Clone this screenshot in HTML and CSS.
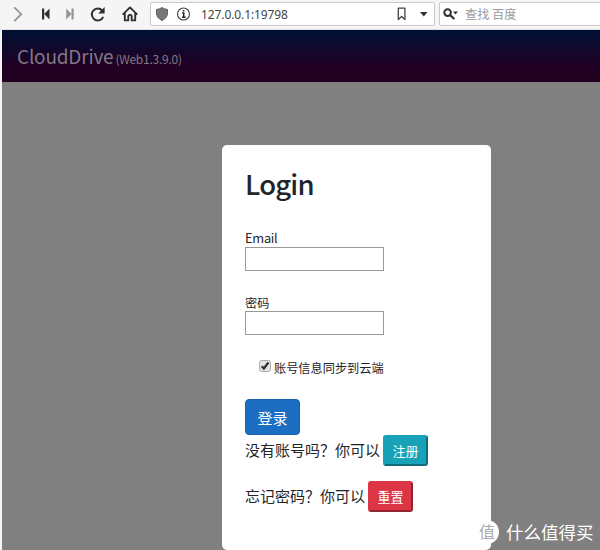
FILE: index.html
```html
<!DOCTYPE html>
<html lang="zh-CN">
<head>
<meta charset="utf-8">
<title>CloudDrive</title>
<link rel="stylesheet" href="styles.css">
</head>
<body>
<div class="toolbar">
  <svg class="nav-icons" width="150" height="29" viewBox="0 0 150 29" fill="none">
    <path d="M14.300 7.300l7 6.900-7 6.900" stroke="#929292" stroke-width="1.700"/>
    <path d="M42 8.500h2.200v11H42zM49.500 8.500v11L44.200 14z" fill="#303030"/>
    <path d="M71.500 8.500h2.200v11h-2.200zM66.200 8.500v11L71.500 14z" fill="#969696"/>
    <path d="M102.200 10.600A5.900 5.900 0 1 0 103.200 16.800" stroke="#303030" stroke-width="2"/>
    <path d="M104.600 7v6.500h-6.500z" fill="#303030"/>
    <path d="M122.700 14.600L130 7.400l7.300 7.200M124.800 13.200v7.200h3.500v-4q0-1.500 1.700-1.500t1.700 1.500v4h3.500v-7.200" stroke="#303030" stroke-width="1.900" stroke-linejoin="round"/>
  </svg>
  <div class="address">
    <svg width="42" height="22" viewBox="0 0 42 22" fill="none">
      <path d="M5.500 6.500Q9 6 11 4.600Q13 6 16.500 6.500V10q0 5-5.500 7.500Q5.500 15 5.500 10z" fill="#777" stroke="#606060"/>
      <circle cx="32.500" cy="11" r="6" stroke="#444" stroke-width="1.100"/>
      <path d="M31.200 9.900h1.500v4M31 14.200h3.600M31.700 7.700h1.700" stroke="#222" stroke-width="1.500"/>
    </svg>
    <span class="url">127.0.0.1:19798</span>
    <svg width="40" height="22" viewBox="0 0 40 22" fill="none">
      <path d="M3.300 5.200h6.600v11.300l-3.300-3-3.300 3z" stroke="#444" stroke-width="1.300" stroke-linejoin="round"/>
      <path d="M25 9h7.500l-3.700 4.500z" fill="#333"/>
    </svg>
  </div>
  <div class="search">
    <svg width="25" height="22" viewBox="0 0 25 22" fill="none">
      <circle cx="7.600" cy="9.600" r="3.300" stroke="#303030" stroke-width="2"/>
      <path d="M10 12l4.300 4" stroke="#303030" stroke-width="2.300"/>
      <path d="M13 8.500h5l-2.500 3z" fill="#303030"/>
    </svg>
    <span>查找 百度</span>
  </div>
</div>
<div class="page">
  <header class="header"><span class="brand">CloudDrive</span><span class="version">(Web1.3.9.0)</span></header>
  <main class="main">
    <form class="card">
      <h1 class="title">Login</h1>
      <label class="label email" for="email">Email</label>
      <input class="field" id="email" type="text">
      <label class="label" for="password">密码</label>
      <input class="field" id="password" type="password">
      <label class="sync">
        <svg width="12" height="12" viewBox="0 0 12 12" fill="none">
          <rect x=".5" y=".5" width="11" height="11" rx="2" fill="#e5e5e5" stroke="#aaa"/>
          <path d="M2.700 6.200l2.200 2.300 4.500-6" stroke="#303030" stroke-width="2.200"/>
        </svg>
        <span>账号信息同步到云端</span>
      </label>
      <button class="login" type="button">登录</button>
      <div class="row"><span class="prompt">没有账号吗？你可以</span><button class="small register" type="button">注册</button></div>
      <div class="row"><span class="prompt">忘记密码？你可以</span><button class="small reset" type="button">重置</button></div>
    </form>
  </main>
</div>
<div class="watermark"><span class="mark">值</span><span class="watermark-text">什么值得买</span></div>
</body>
</html>
```
FILE: styles.css
```css
* { box-sizing: border-box; }
body {
  margin: 0;
  height: 550px;
  overflow: hidden;
  position: relative;
  background: #f5f5f5;
  color: #212529;
  font-family: "Noto Sans CJK SC", sans-serif;
}
svg { display: block; flex: none; }
.toolbar {
  display: flex;
  height: 30px;
  border-bottom: 1px solid #dce0e5;
}
.address, .search {
  display: flex;
  flex: none;
  align-items: center;
  height: 24px;
  margin-top: 2px;
  border: 1px solid #c9c9c9;
  border-radius: 2px;
  background: #fff;
}
.address { width: 285px; }
.address svg:last-child { margin-right: -1px; }
.search {
  width: 170px;
  margin-left: 4px;
  color: #999;
  font-size: 12.2px;
}
.url {
  flex: 1;
  padding-left: 8px;
  color: #444;
  font: 12px "Noto Sans", sans-serif;
  letter-spacing: -0.1px;
}
.page { margin-left: 2px; }
.header {
  display: flex;
  align-items: baseline;
  height: 52px;
  padding: 12px 0 0 15px;
  background: linear-gradient(#001033, #220023 75%, #220020);
  color: #827884;
  line-height: 28px;
}
.brand { font-size: 19px; letter-spacing: -0.2px; }
.version { margin-left: 2px; font-size: 12px; letter-spacing: -0.25px; }
.main {
  height: 468px;
  padding: 63px 0 0 220px;
  background: #808080;
}
.card {
  display: flex;
  flex-direction: column;
  align-items: flex-start;
  width: 268.5px;
  height: 405px;
  padding: 18px 23px 20px;
  border-radius: 5px;
  background: #fff;
}
.title {
  height: 67px;
  margin: 0;
  font-size: 27.5px;
  font-weight: 500;
  letter-spacing: -0.8px;
  line-height: 40px;
}
.label {
  height: 17px;
  font-size: 12.2px;
  line-height: 18px;
}
.email { font-size: 12.8px; letter-spacing: -0.25px; line-height: 16px; }
.field {
  width: 139px;
  height: 24px;
  margin: 0 0 23px;
  padding: 1px 4px;
  border: 1px solid #999;
  background: #fff;
}
.sync {
  display: flex;
  align-items: center;
  height: 20px;
  margin: 0 0 21px 14px;
  gap: 3px;
  font-size: 12.2px;
}
.sync svg { margin-top: -4px; }
.login {
  width: 55px;
  height: 36px;
  padding: 0;
  border: 1px solid #1861ac;
  border-radius: 4px;
  background: #1b6ec2;
  color: #fff;
  font: 15px "Noto Sans CJK SC", sans-serif;
}
.row {
  display: flex;
  align-items: center;
  height: 31px;
  margin-bottom: 15px;
  gap: 3px;
  font-size: 15px;
}
.prompt { margin-top: -2px; }
.small {
  width: 45px;
  height: 31px;
  padding: 0;
  border: 2px solid;
  border-radius: 3px;
  color: #fff;
  font: 13px "Noto Sans CJK SC", sans-serif;
}
.register { border-color: #17a2b8 #106c7b #106c7b #17a2b8; background: #17a2b8; }
.reset { border-color: #dc3545 #93232e #93232e #dc3545; background: #dc3545; }
.watermark {
  position: absolute;
  left: 475px;
  top: 520px;
  display: flex;
  align-items: center;
  height: 24px;
  gap: 7px;
  color: #fff;
  font-size: 17.5px;
}
.watermark-text { margin-top: -1px; }
.mark {
  width: 24px;
  height: 24px;
  border-radius: 50%;
  background: #fff;
  color: #aaa;
  font-size: 16px;
  line-height: 23px;
  text-align: center;
}
```
